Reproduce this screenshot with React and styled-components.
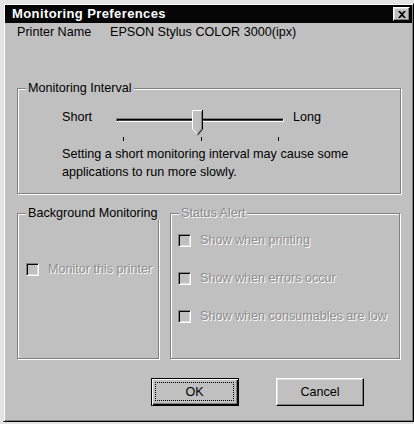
import React from "react";
import styled, { createGlobalStyle } from "styled-components";

const Global = createGlobalStyle`
  html, body { margin: 0; padding: 0; background: #e4e4e4; }
  body {
    font-family: "Liberation Sans", Arial, sans-serif;
    font-size: 12.6px;
    color: #000;
  }
`;

const Window = styled.div`
  box-sizing: border-box;
  margin: 3px 0 0 3px;
  width: 411px;
  height: 419px;
  background: #c0c0c0;
  border: 1px solid;
  border-color: #dfdfdf #000 #000 #dfdfdf;
  box-shadow: inset 1px 1px #fff, inset -1px -1px #808080;
  padding: 1px;
  display: flex;
  flex-direction: column;
`;

const TitleBar = styled.div`
  height: 18px;
  background: #050505;
  color: #fff;
  display: flex;
  align-items: center;
  justify-content: space-between;
  padding: 0 2px 0 7px;
`;

const Title = styled.span`
  font-weight: bold;
  font-size: 13px;
  letter-spacing: 0.4px;
  line-height: 18px;
  white-space: nowrap;
`;

const CloseButton = styled.button`
  box-sizing: border-box;
  width: 17px;
  height: 14px;
  padding: 0;
  background: #c0c0c0;
  border: 1px solid;
  border-color: #fff #000 #000 #fff;
  box-shadow: inset -1px -1px #808080, inset 1px 1px #dfdfdf;
  display: flex;
  align-items: center;
  justify-content: center;
`;

const Body = styled.div`
  padding: 2px 0 0 12px;
  display: flex;
  flex-direction: column;
`;

const InfoRow = styled.div`
  display: flex;
  line-height: 14px;
  white-space: nowrap;
`;

const InfoLabel = styled.span`
  width: 93px;
`;

const Group = styled.fieldset`
  box-sizing: border-box;
  margin: ${(p) => p.$mt || 0}px 0 0 0;
  padding: 0;
  min-inline-size: 0;
  width: ${(p) => p.$w}px;
  height: ${(p) => (p.$h ? `${p.$h}px` : "auto")};
  border: 1px solid #808080;
  box-shadow: inset 1px 1px #fff, 1px 1px #fff;
`;

const Legend = styled.legend`
  margin-left: 8px;
  padding: 0 2px;
  line-height: 14px;
  background: #c0c0c0;
  white-space: nowrap;
  color: ${(p) => (p.$disabled ? "#8a8a8a" : "#000")};
  text-shadow: ${(p) => (p.$disabled ? "1px 1px 0 #fff" : "none")};
`;

const GroupContent = styled.div`
  padding: ${(p) => p.$pad};
`;

const SliderRow = styled.div`
  display: flex;
  align-items: flex-start;
  height: 28px;
  margin-top: 13px;
`;

const SideLabel = styled.span`
  width: ${(p) => p.$w || "auto"};
  margin-left: ${(p) => p.$ml || 0}px;
  margin-top: 2px;
  line-height: 14px;
`;

const Track = styled.div`
  position: relative;
  width: 168px;
  height: 28px;
`;

const Groove = styled.div`
  margin-top: 10px;
  height: 2px;
  border: 1px solid;
  border-color: #808080 #fff #fff #808080;
  box-shadow: inset 1px 1px #000;
  background: #404040;
`;

const Thumb = styled.svg`
  position: absolute;
  top: 2px;
`;

const Ticks = styled.div`
  box-sizing: border-box;
  display: flex;
  justify-content: space-between;
  width: 168px;
  height: 4px;
  margin: 1px 0 0 54px;
  padding: 0 5px 0 7px;
`;

const Tick = styled.span`
  width: 1px;
  height: 4px;
  background: #000;
`;

const Note = styled.p`
  margin: 4px 0 0 0;
  line-height: 18px;
  white-space: nowrap;
`;

const LowerRow = styled.div`
  display: flex;
  gap: 11px;
  margin-top: 12px;
`;

const CheckList = styled.div`
  display: flex;
  flex-direction: column;
  gap: ${(p) => p.$gap || 0}px;
`;

const CheckRow = styled.label`
  display: flex;
  align-items: center;
  gap: 9px;
  line-height: 14px;
  white-space: nowrap;
`;

const Box = styled.span`
  box-sizing: border-box;
  width: 13px;
  height: 13px;
  border: 1px solid;
  border-color: #808080 #fff #fff #808080;
  box-shadow: inset 1px 1px #000, inset -1px -1px #dfdfdf;
  background: ${(p) => (p.$disabled ? "#c0c0c0" : "#fff")};
`;

const CheckText = styled.span`
  color: ${(p) => (p.$disabled ? "#8e8e8e" : "#000")};
  text-shadow: ${(p) => (p.$disabled ? "1px 1px 0 #fff" : "none")};
`;

const ButtonRow = styled.div`
  display: flex;
  gap: 37px;
  margin: 19px 0 0 134px;
`;

const Button = styled.button`
  box-sizing: border-box;
  width: 88px;
  height: 28px;
  padding: 0;
  font-family: inherit;
  font-size: 12.6px;
  color: #000;
  background: #c0c0c0;
  display: flex;
  align-items: stretch;
  border: 1px solid;
  border-color: ${(p) => (p.$default ? "#000" : "#fff #000 #000 #fff")};
  box-shadow: ${(p) =>
    p.$default
      ? "inset 1px 1px #fff, inset -1px -1px #000, inset -2px -2px #808080"
      : "inset -1px -1px #808080, inset 1px 1px #dfdfdf"};
`;

const ButtonFace = styled.span`
  flex: 1;
  display: flex;
  align-items: center;
  justify-content: center;
  margin: ${(p) => (p.$focus ? "3px 4px 4px 3px" : "0")};
  border: ${(p) => (p.$focus ? "1px dotted #000" : "none")};
`;

const Check = ({ label, disabled }) => (
  <CheckRow>
    <Box $disabled={disabled} />
    <CheckText $disabled={disabled}>{label}</CheckText>
  </CheckRow>
);

export default function App() {
  const thumbLeft = 76;
  return (
    <>
      <Global />
      <Window>
        <TitleBar>
          <Title>Monitoring Preferences</Title>
          <CloseButton aria-label="Close">
            <svg width="8" height="7" viewBox="0 0 8 7">
              <path d="M0 0h2l2 2 2-2h2L5 3.5 8 7H6L4 5 2 7H0l3-3.5z" fill="#000" />
            </svg>
          </CloseButton>
        </TitleBar>
        <Body>
          <InfoRow>
            <InfoLabel>Printer Name</InfoLabel>
            <span>EPSON Stylus COLOR 3000(ipx)</span>
          </InfoRow>

          <Group $mt={42} $w={384}>
            <Legend>Monitoring Interval</Legend>
            <GroupContent $pad="0 0 12px 44px">
              <SliderRow>
                <SideLabel $w="54px">Short</SideLabel>
                <Track>
                  <Groove />
                  <Thumb
                    width="11"
                    height="26"
                    viewBox="0 0 11 26"
                    style={{ left: thumbLeft }}
                  >
                    <polygon points="0,0 11,0 11,19 5.5,25.5 0,19" fill="#c0c0c0" />
                    <polyline points="0.5,19 0.5,0.5 10,0.5" fill="none" stroke="#fff" />
                    <polyline points="0.8,19.2 5.5,24.6" fill="none" stroke="#fff" />
                    <polyline points="9.5,1.5 9.5,18.8 5.5,23.5" fill="none" stroke="#808080" />
                    <polyline points="10.5,0 10.5,19.2 5.5,25.2" fill="none" stroke="#000" />
                  </Thumb>
                </Track>
                <SideLabel $ml={9}>Long</SideLabel>
              </SliderRow>
              <Ticks>
                <Tick />
                <Tick />
                <Tick />
              </Ticks>
              <Note>
                Setting a short monitoring interval may cause some
                <br />
                applications to run more slowly.
              </Note>
            </GroupContent>
          </Group>

          <LowerRow>
            <Group $w={142} $h={153}>
              <Legend>Background Monitoring</Legend>
              <GroupContent $pad="42px 0 0 8px">
                <CheckList>
                  <Check label="Monitor this printer" disabled />
                </CheckList>
              </GroupContent>
            </Group>
            <Group $w={230} $h={153}>
              <Legend $disabled>Status Alert</Legend>
              <GroupContent $pad="13px 0 0 7px">
                <CheckList $gap={24}>
                  <Check label="Show when printing" disabled />
                  <Check label="Show when errors occur" disabled />
                  <Check label="Show when consumables are low" disabled />
                </CheckList>
              </GroupContent>
            </Group>
          </LowerRow>

          <ButtonRow>
            <Button $default>
              <ButtonFace $focus>OK</ButtonFace>
            </Button>
            <Button>
              <ButtonFace>Cancel</ButtonFace>
            </Button>
          </ButtonRow>
        </Body>
      </Window>
    </>
  );
}
